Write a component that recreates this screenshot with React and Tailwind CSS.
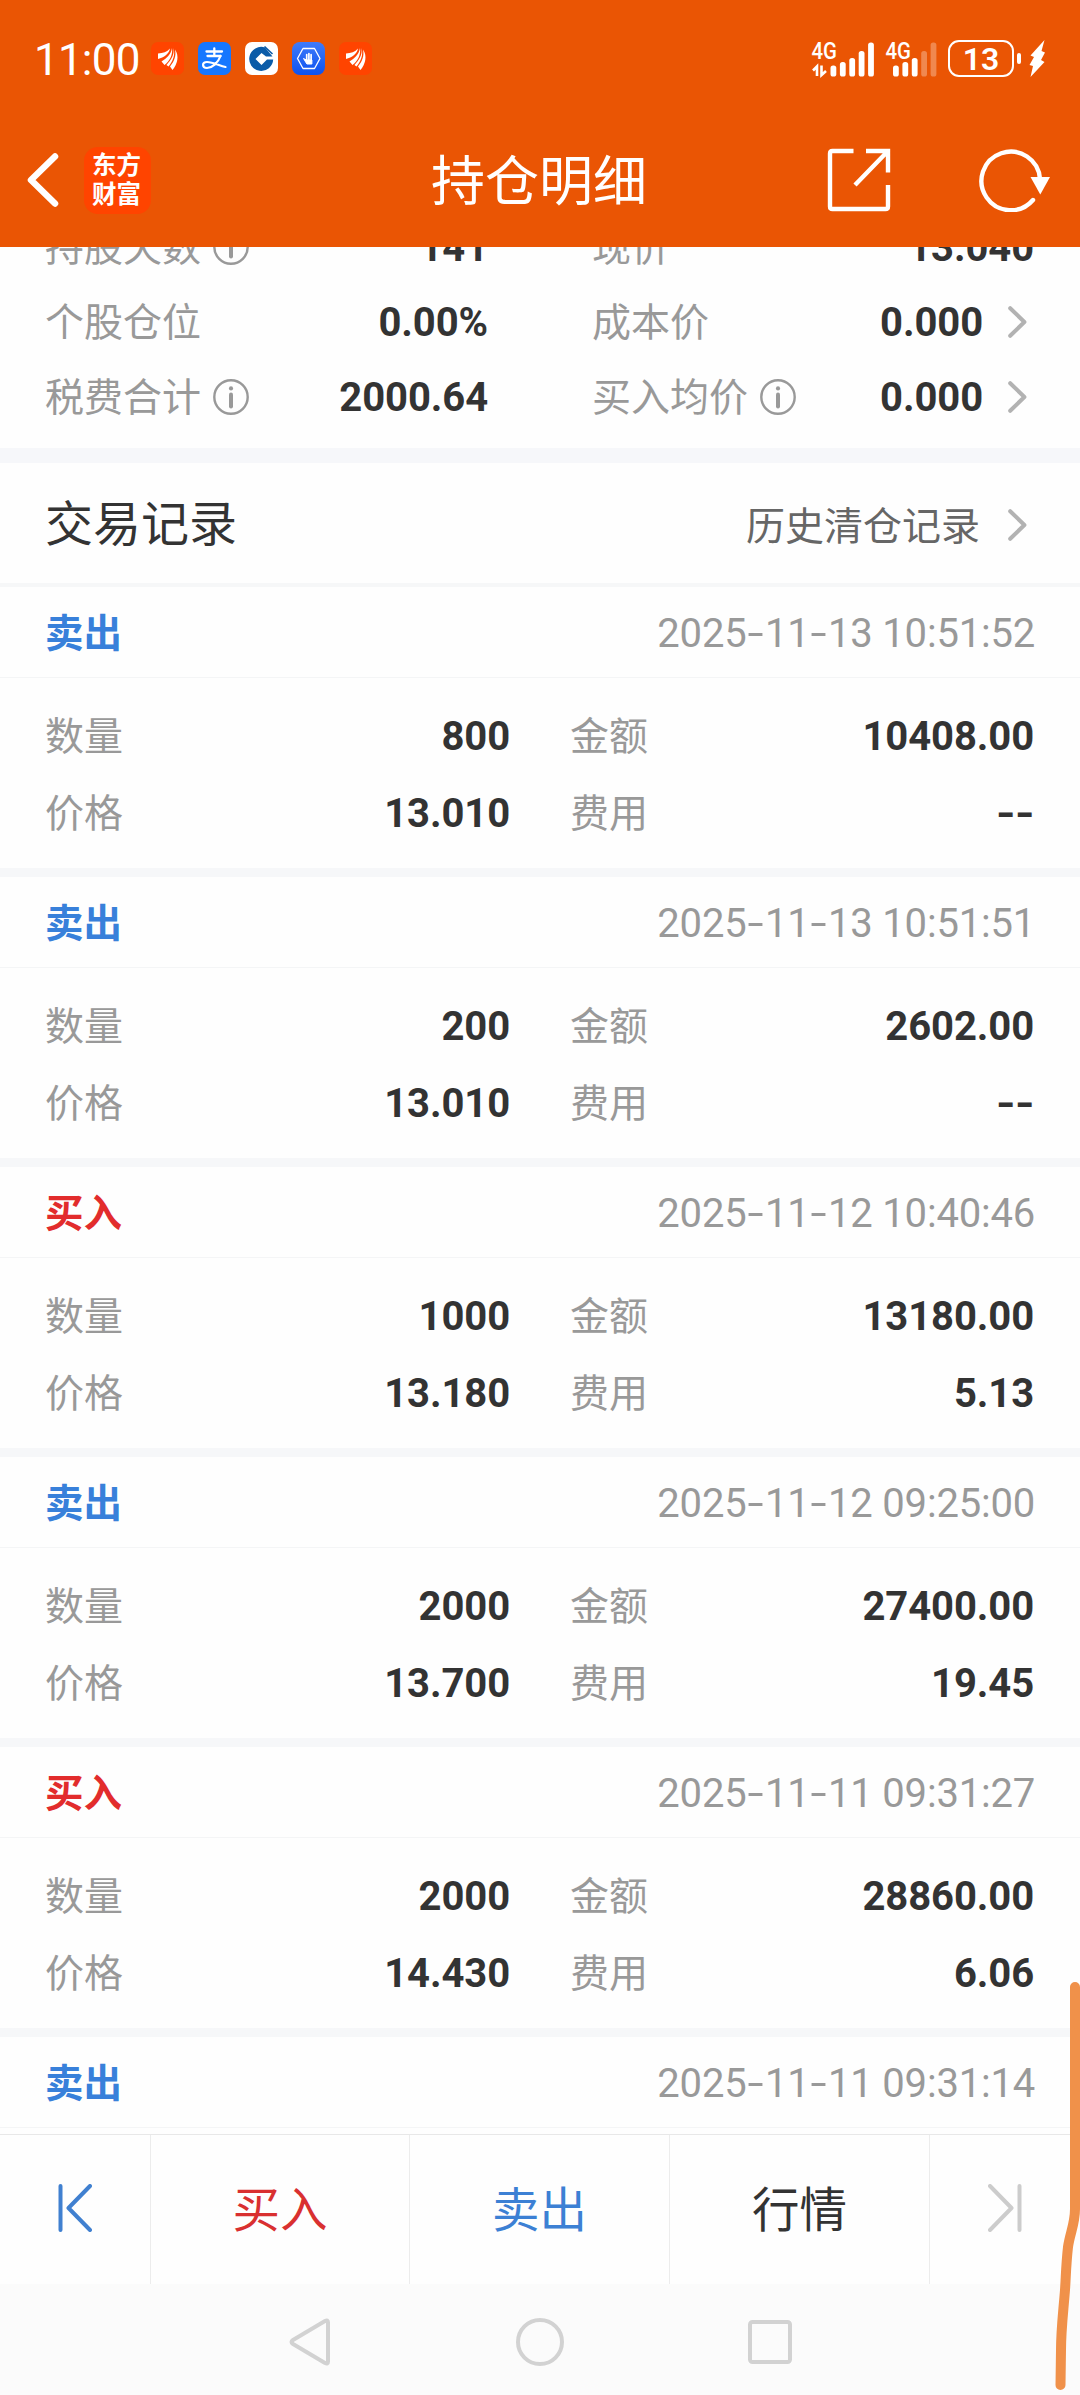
import { clsx } from 'clsx';

const holdings = [
  {
    left: { label: '持股天数', info: true, value: '141' },
    right: { label: '现价', value: '13.040' },
  },
  {
    left: { label: '个股仓位', value: '0.00%' },
    right: { label: '成本价', value: '0.000', link: true },
  },
  {
    left: { label: '税费合计', info: true, value: '2000.64' },
    right: { label: '买入均价', info: true, value: '0.000', link: true },
  },
];

const records = [
  { side: 'sell', time: '2025-11-13 10:51:52', qty: '800', amount: '10408.00', price: '13.010', fee: '--' },
  { side: 'sell', time: '2025-11-13 10:51:51', qty: '200', amount: '2602.00', price: '13.010', fee: '--' },
  { side: 'buy', time: '2025-11-12 10:40:46', qty: '1000', amount: '13180.00', price: '13.180', fee: '5.13' },
  { side: 'sell', time: '2025-11-12 09:25:00', qty: '2000', amount: '27400.00', price: '13.700', fee: '19.45' },
  { side: 'buy', time: '2025-11-11 09:31:27', qty: '2000', amount: '28860.00', price: '14.430', fee: '6.06' },
  { side: 'sell', time: '2025-11-11 09:31:14' },
];

// Digits with wide dashes
const Digits = ({ text, bold, className }) => (
  <span
    className={clsx(
      "pt-0.5 font-['Roboto',sans-serif] text-[40px] leading-none whitespace-pre",
      bold ? 'font-bold tracking-[-0.100px] text-[#333]' : 'tracking-[-0.200px] text-[#999]',
      className
    )}
  >
    {text.split('').map((ch, i) =>
      ch === '-' ? (
        <span key={i} className="inline-flex w-[18.5px] justify-center">
          <span className={bold ? 'scale-x-[1.25]' : 'scale-x-[1.45]'}>-</span>
        </span>
      ) : (
        ch
      )
    )}
  </span>
);

const InfoIcon = () => (
  <svg className="ml-3 h-9 w-9" viewBox="0 0 36 36" fill="none" stroke="#999" strokeWidth="2.4">
    <circle cx="18" cy="18" r="16.7" />
    <path d="M18 15.5v12" strokeWidth="4" strokeLinecap="round" />
    <circle cx="18" cy="9.4" r="2.1" fill="#999" stroke="none" />
  </svg>
);

const Chevron = () => (
  <svg className="h-8 w-[19px]" viewBox="0 0 19 32" fill="none" stroke="#b2b2b2" strokeWidth="4" strokeLinecap="round" strokeLinejoin="round">
    <path d="M2.2 2.2 16.4 16 2.2 29.8" />
  </svg>
);

const Label = ({ children }) => <span className="pb-[5px] text-[39px] leading-none text-[#999]">{children}</span>;

const EastMoneyBadge = () => (
  <svg className="h-[33px] w-[33px]" viewBox="0 0 33 33">
    <rect width="33" height="33" rx="7" fill="#ff4400" />
    <g fill="#fff">
      <path d="M19 6.5C16 10 12 11.200 7 11.500V17C13 15.500 18 12 19 6.500z" />
      <path d="M21 6C20 12.500 15.500 16.500 10.500 19.500L13.500 23C18.500 19 22 13 21 6z" />
      <path d="M22.500 6C23.500 13 20 18 15.500 23L17.500 24.500C22 19 24.500 13 22.500 6z" />
      <path d="M24 7.500C25.500 14 23 19.500 19 24.500L21.500 28C26.500 22 28.500 14 24 7.500z" />
    </g>
  </svg>
);

const AlipayBadge = () => (
  <svg className="h-[33px] w-[33px]" viewBox="0 0 33 33" fill="none" stroke="#fff" strokeLinecap="round">
    <rect width="33" height="33" rx="7" fill="#1677ff" stroke="none" />
    <path d="M8.500 9.500h15.500M16.300 6.500v7M9.500 14h13" strokeWidth="2.300" />
    <path d="M22.500 14C20 21 14 26 9 26c-5 0-5.500-6 0-6 6 0 12 3.500 18.500 5" strokeWidth="2.200" />
  </svg>
);

const BankBadge = () => (
  <svg className="h-[33px] w-[33px]" viewBox="0 0 33 33">
    <rect width="33" height="33" rx="7" fill="#fff" />
    <path d="M20 5.500A12 12 0 1 0 28.200 17.500h-6.200l-5.500 5.500-6-6 6-6 4.500 3.500h6.500z" fill="#0a5ba8" />
    <path d="m19.500 4.500 8 7.500" stroke="#0a5ba8" strokeWidth="1.600" />
  </svg>
);

const HandBadge = () => (
  <svg className="h-[33px] w-[33px]" viewBox="0 0 33 33" fill="none" stroke="#fff">
    <defs>
      <linearGradient id="hand" x1="0" y1="0" x2="0" y2="1">
        <stop stopColor="#3f7bfa" />
        <stop offset="1" stopColor="#0d52f0" />
      </linearGradient>
    </defs>
    <rect width="33" height="33" rx="8" fill="url(#hand)" stroke="none" />
    <path d="M11 6.500h11.500L28 16.500l-5.500 10H11L5.500 16.500z" strokeWidth="1.300" strokeLinejoin="round" />
    <path d="M14.700 12.500v6M16.900 11.500v7M19.100 12.500v6" strokeWidth="1.700" strokeLinecap="round" />
    <path d="m11.500 16.500 3 1.500h5.400v4h-5z" fill="#fff" />
  </svg>
);

const Signal = ({ level, arrows }) => (
  <svg className="h-[36px] w-[62px] overflow-visible" viewBox="0 0 62 36">
    <text x="-0.5" y="18" fontSize="23" fontWeight="500" fill="#fff" fontFamily="Roboto, sans-serif" textLength="25.500" lengthAdjust="spacingAndGlyphs">4G</text>
    {arrows && (
      <path d="M5 35v-9.500L1 29.500M9.500 24.500v9.500l4.500-4" fill="none" stroke="#fff" strokeWidth="2.600" />
    )}
    {[11, 14.5, 18.5, 25.5, 34].map((h, i) => (
      <rect
        key={h}
        x={(arrows ? 18.5 : 7) + i * 9.4}
        y={35.5 - h}
        width="5.800"
        height={h}
        rx="2.600"
        fill="#fff"
        opacity={i < level ? 1 : 0.3}
      />
    ))}
  </svg>
);

const StatusBar = () => (
  <div className="flex h-[117px] items-center pl-[34px] pr-[35px] text-white">
    <span className="w-[117px] pt-0.5 font-['Roboto',sans-serif] text-[44px] leading-none tracking-[-0.800px]">11:00</span>
    <div className="flex gap-[14px]">
      <EastMoneyBadge />
      <AlipayBadge />
      <BankBadge />
      <HandBadge />
      <EastMoneyBadge />
    </div>
    <div className="ml-auto flex items-center">
      <Signal level={5} arrows />
      <div className="ml-3">
        <Signal level={3} />
      </div>
      <div className="flex h-[37px] w-[66px] items-center justify-center rounded-[11px] border-[2.500px] border-white font-['Roboto',sans-serif] text-[32px] leading-none font-semibold">
        13
      </div>
      <div className="ml-[3px] h-[11px] w-1 rounded-[2px] bg-white" />
      <svg className="ml-2 h-[37px] w-4" viewBox="0 0 16 37" fill="#fff">
        <path d="M15.500 0 1.500 15.500 5 17 .5 25l3.500 1L1.500 37 15.500 22 12 20l4-7.500-3.500-1.500z" />
      </svg>
    </div>
  </div>
);

const TitleBar = () => (
  <div className="grid h-[130px] grid-cols-3 items-center pb-1 text-white">
    <div className="flex items-center pl-[27px]">
      <svg className="h-[54px] w-8" viewBox="0 0 32 54" fill="none" stroke="#fff" strokeWidth="6.500" strokeLinecap="round" strokeLinejoin="round">
        <path d="M28 3.500 4 27l24 23.500" />
      </svg>
      <div className="ml-[25px] flex h-[67px] w-[67px] flex-col items-center justify-center rounded-[14px] bg-[#ff4400] pr-0.5 pb-[5px] text-[24.500px] leading-[29px] font-bold">
        <span>东方</span>
        <span>财富</span>
      </div>
    </div>
    <h1 className="pr-0.5 pb-[5px] text-center text-[54px] leading-none whitespace-nowrap">持仓明细</h1>
    <div className="flex items-center justify-end pr-[30px]">
      <svg className="h-16 w-16" viewBox="0 0 64 64" fill="none" stroke="#fff" strokeWidth="4.400">
        <path d="M26.500 3H5.500Q3 3 3 5.500v53Q3 61 5.500 61h53q2.500 0 2.500-2.500V37" />
        <path d="M39 3h22v21.500M60 4 28 37" />
      </svg>
      <svg className="ml-[88px] h-16 w-[71px]" viewBox="0 0 71 64" fill="none" stroke="#fff" strokeWidth="4.400">
        <path d="M54 52A29.300 29.300 0 1 1 61 31" strokeLinecap="round" />
        <path d="M51.500 29h19.500l-9.700 17.500z" fill="#fff" stroke="none" />
      </svg>
    </div>
  </div>
);

const HoldingCell = ({ item }) => (
  <div className="flex items-center">
    <Label>{item.label}</Label>
    {item.info && <InfoIcon />}
    <Digits text={item.value} bold className="ml-auto" />
    {item.link && (
      <div className="mr-[7px] ml-[25px]">
        <Chevron />
      </div>
    )}
  </div>
);

const Pair = ({ label, value }) => (
  <div className="flex h-[77px] items-center justify-between">
    <Label>{label}</Label>
    <Digits text={value} bold />
  </div>
);

const Record = ({ record }) => (
  <section className="h-[290px] shrink-0 border-b-[9px] border-[#f6f7f9]">
    <div className="flex h-[91px] items-center justify-between border-b border-[#f4f5f6] pr-[45px] pl-[45px]">
      <span
        className={clsx(
          'pb-1 text-[38.500px] leading-none font-bold',
          record.side === 'sell' ? 'text-[#3880da]' : 'text-[#e22c2c]'
        )}
      >
        {record.side === 'sell' ? '卖出' : '买入'}
      </span>
      <Digits text={record.time} className="mt-0.5" />
    </div>
    {record.qty && (
      <div className="grid grid-cols-[465px_464px] gap-x-[60px] pt-[19px] pl-[45px]">
        <Pair label="数量" value={record.qty} />
        <Pair label="金额" value={record.amount} />
        <Pair label="价格" value={record.price} />
        <Pair label="费用" value={record.fee} />
      </div>
    )}
  </section>
);

const ActionBar = () => (
  <nav className="grid h-[150px] shrink-0 grid-cols-[151px_259px_260px_260px_150px] border-t border-[#e8e8e8] bg-[#fefefe] text-[47.500px] leading-none">
    <div className="flex items-center justify-center border-r border-[#ececec] pb-1">
      <svg className="h-12 w-[34px]" viewBox="0 0 34 48" fill="none" stroke="#4080d0" strokeWidth="4" strokeLinecap="round" strokeLinejoin="round">
        <path d="M2.500 2v44M32 2 10.500 24 32 46" />
      </svg>
    </div>
    <div className="flex items-center justify-center border-r border-[#ececec] pb-[5px] text-[#d93030]">买入</div>
    <div className="flex items-center justify-center border-r border-[#ececec] pb-[5px] text-[#3c80d4]">卖出</div>
    <div className="flex items-center justify-center border-r border-[#ececec] pb-[5px] text-[#333]">行情</div>
    <div className="flex items-center justify-center pb-1">
      <svg className="h-12 w-[34px]" viewBox="0 0 34 48" fill="none" stroke="#ccc" strokeWidth="4" strokeLinecap="round" strokeLinejoin="round">
        <path d="M31.500 2v44M2 2l21.500 22L2 46" />
      </svg>
    </div>
  </nav>
);

const SystemNav = () => (
  <div className="flex h-[111px] shrink-0 items-center justify-center bg-[#fbfbfb] pt-[5px]">
    <svg className="h-12 w-[44px]" viewBox="0 0 44 48" fill="none" stroke="#d2d2d2" strokeWidth="4" strokeLinejoin="round">
      <path d="M40 4.500v39q0 3-3 1.500L5 26q-3-2 0-4L37 3q3-1.500 3 1.500z" />
    </svg>
    <svg className="mx-[184px] h-12 w-12" viewBox="0 0 48 48" fill="none" stroke="#d2d2d2" strokeWidth="4">
      <circle cx="24" cy="24" r="22" />
    </svg>
    <svg className="h-11 w-11" viewBox="0 0 44 44" fill="none" stroke="#d2d2d2" strokeWidth="4">
      <rect x="2" y="2" width="40" height="40" rx="2.500" />
    </svg>
  </div>
);

const App = () => {
  return (
    <div className="relative flex h-[2395px] w-[1080px] flex-col overflow-hidden bg-[#fefefe] font-['Noto_Sans_CJK_SC',sans-serif]">
      <header className="relative z-10 h-[247px] shrink-0 bg-[#ea5504]">
        <StatusBar />
        <TitleBar />
      </header>

      <main className="flex min-h-0 flex-1 flex-col overflow-hidden">
        {/* list is scrolled, first row sits half under the header */}
        <div className="-mt-[38px] h-[239px] shrink-0">
          {holdings.map((row) => (
            <div key={row.left.label} className="grid h-[75px] grid-cols-[443px_442px] gap-x-[104px] pl-[45px]">
              <HoldingCell item={row.left} />
              <HoldingCell item={row.right} />
            </div>
          ))}
        </div>
        <div className="h-[15px] shrink-0 bg-[#f6f7fa]" />

        <div className="flex h-[124px] shrink-0 items-center border-b-4 border-[#f6f7f8] pr-[53px] pl-[45px]">
          <h2 className="pb-1.5 text-[48px] leading-none text-[#333]">交易记录</h2>
          <span className="mr-[28px] ml-auto text-[39px] leading-none text-[#666]">历史清仓记录</span>
          <div className="pt-1">
            <Chevron />
          </div>
        </div>

        {records.map((record) => (
          <Record key={record.time} record={record} />
        ))}
      </main>

      <ActionBar />
      <SystemNav />

      {/* edge stroke drawn over the page */}
      <svg className="pointer-events-none absolute right-0 bottom-0 z-20 h-[420px] w-[30px]" viewBox="0 0 30 420" fill="none" stroke="#f0914a" strokeWidth="10" strokeLinecap="round">
        <path d="M25 12V234C25 249 20 258 18 272C16 290 16 300 15 315C13 340 11 355 11 375L10.500 410" />
      </svg>
    </div>
  );
};

export default App;
